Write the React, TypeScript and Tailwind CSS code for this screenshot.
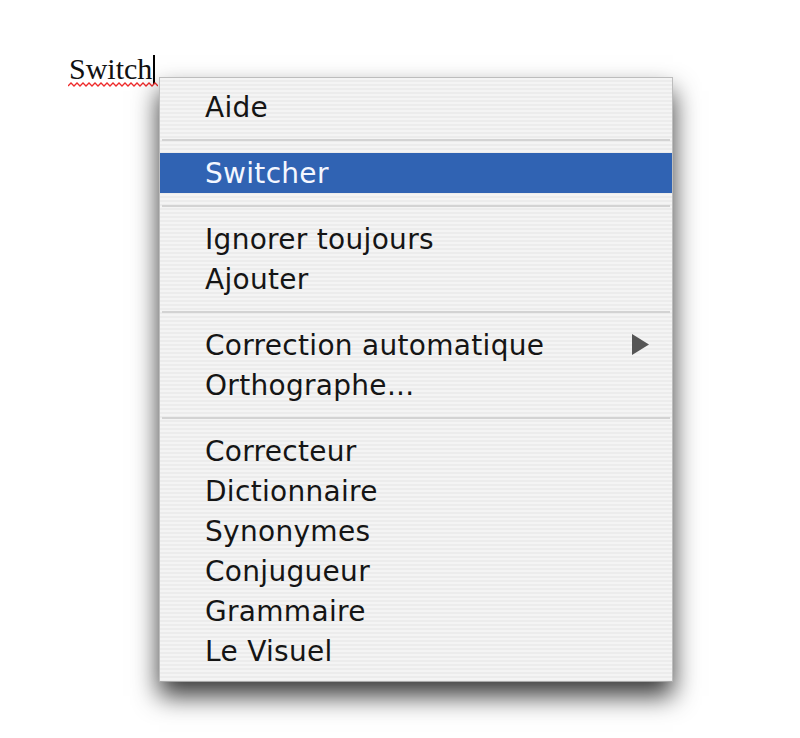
const menuFont = { fontFamily: '"DejaVu Sans", "Liberation Sans", sans-serif' };

type Entry = { label: string; highlighted?: boolean; submenu?: boolean } | 'sep';

const entries: Entry[] = [
  { label: 'Aide' },
  'sep',
  { label: 'Switcher', highlighted: true },
  'sep',
  { label: 'Ignorer toujours' },
  { label: 'Ajouter' },
  'sep',
  { label: 'Correction automatique', submenu: true },
  { label: 'Orthographe...' },
  'sep',
  { label: 'Correcteur' },
  { label: 'Dictionnaire' },
  { label: 'Synonymes' },
  { label: 'Conjugueur' },
  { label: 'Grammaire' },
  { label: 'Le Visuel' },
];

// zig-zag for the spelling underline
const wavePoints = Array.from({ length: 31 }, (_, i) => `${i * 3},${i % 2 === 0 ? 4 : 1}`).join(' ');

function MenuRow({ label, highlighted, submenu }: { label: string; highlighted?: boolean; submenu?: boolean }) {
  return (
    <div
      className={`flex h-[40px] items-center justify-between pl-[45px] pr-[23px] text-[28px] leading-[40px] tracking-[0.3px] ${
        highlighted ? 'bg-[#3063b3] text-[#f4f7ff]' : 'text-[#151515]'
      }`}
    >
      <span className="translate-y-[1px]">{label}</span>
      {submenu && (
        <svg width="17" height="21" viewBox="0 0 17 21" className="mt-[-2px]">
          <polygon points="0,0 17,10.5 0,21" fill="#555" />
        </svg>
      )}
    </div>
  );
}

function Separator() {
  return (
    <div className="flex h-[26px] items-center px-[2px]">
      <div className="h-[2px] w-full bg-[#d3d3d3]" />
    </div>
  );
}

export default function App() {
  return (
    <div className="relative h-[738px] w-[800px] overflow-hidden bg-white">
      {/* text being edited */}
      <div className="pl-[69px] pt-[54px]">
        <span className="relative inline-flex items-start">
          <span className="text-[30px] leading-[30px] text-[#111]" style={{ fontFamily: '"Liberation Serif", serif' }}>
            Switch
          </span>
          <span className="ml-[1px] mt-[1px] inline-block h-[29px] w-[2px] bg-black" />
          <svg className="absolute left-[-1px] top-[28px]" width="90" height="6" viewBox="0 0 90 6">
            <polyline points={wavePoints} fill="none" stroke="#ee2a2a" strokeWidth="1.3" />
          </svg>
        </span>
      </div>

      {/* contextual menu */}
      <div
        className="absolute left-[159px] top-[77px] w-[514px] border border-[#bdbdbd] border-b-[#a8a8a8] pb-[10px] pt-[9px] shadow-[0_14px_24px_rgba(0,0,0,0.78)] bg-[repeating-linear-gradient(to_bottom,#f4f4f4_0px,#f4f4f4_2px,#ececec_2px,#ececec_4px)]"
        style={menuFont}
      >
        {entries.map((e, i) =>
          e === 'sep' ? <Separator key={i} /> : <MenuRow key={i} {...e} />
        )}
      </div>
    </div>
  );
}
